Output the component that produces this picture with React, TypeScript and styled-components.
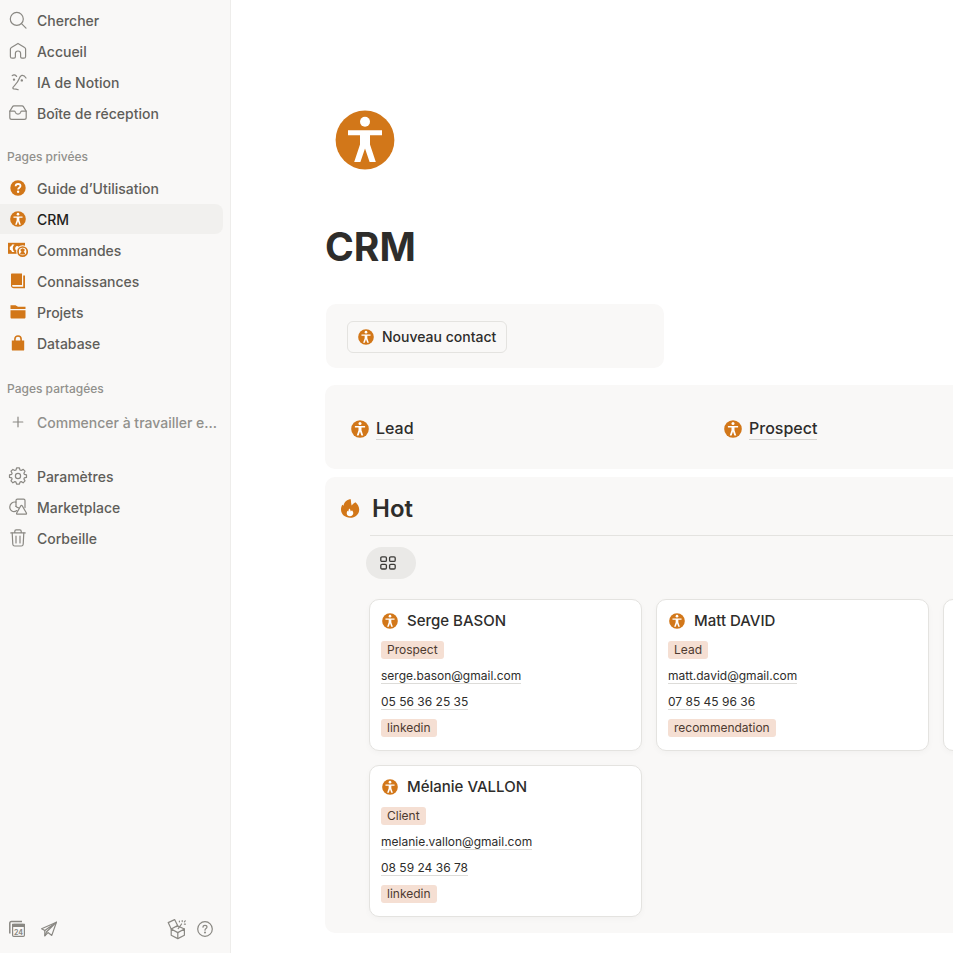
import React from "react";
import styled, { createGlobalStyle, css } from "styled-components";

const color = {
  orange: "#d27719",
  text: "#2e2d2b",
  strong: "#1f1e1c",
  nav: "#5f5e5a",
  muted: "#91908c",
  icon: "#8a8883",
  panel: "#f9f8f7",
  line: "#e4e3e0",
  tag: "#f5dfd3",
  tagText: "#4d3a30",
};

const GlobalStyle = createGlobalStyle`
  *, *::before, *::after { box-sizing: border-box; }
  body {
    margin: 0;
    background: #ffffff;
    color: ${color.text};
    font-family: Inter, "Liberation Sans", sans-serif;
    -webkit-font-smoothing: antialiased;
  }
  h1, h2, h3, ul { margin: 0; padding: 0; }
  ul { list-style: none; }
  a { color: inherit; text-decoration: none; }
  button { font: inherit; color: inherit; cursor: pointer; }
  svg { display: block; flex: none; }
`;

/* ---------- icons ---------- */

type IconProps = { size?: number };

const PersonIcon = ({ size = 16 }: IconProps) => (
  <svg width={size} height={size} viewBox="0 0 60 60" aria-hidden="true">
    <circle cx="30" cy="30" r="29.4" fill={color.orange} />
    <g fill="#fff">
      <circle cx="30" cy="11.8" r="5" />
      <path d="M13 20.3H47V25.2H35V34.5L40.8 52H34.6L30 38.6L25.4 52H19.2L25 34.5V25.2H13Z" />
    </g>
  </svg>
);

const QuestionDiscIcon = () => (
  <svg width="16" height="16" viewBox="0 0 16 16" aria-hidden="true">
    <circle cx="8" cy="8" r="7.7" fill={color.orange} />
    <path d="M5.6 6.2C5.7 4.8 6.7 4 8.1 4C9.6 4 10.5 4.9 10.5 6C10.5 7 9.8 7.4 9.1 7.9C8.4 8.4 8.1 8.7 8.1 9.4" fill="none" stroke="#fff" strokeWidth="1.8" />
    <circle cx="8.1" cy="11.7" r="1.2" fill="#fff" />
  </svg>
);

const MoneyIcon = () => (
  <svg width="20" height="16" viewBox="0 0 20 16" aria-hidden="true">
    <rect x="0" y="0.8" width="17" height="11" fill={color.orange} />
    <path d="M4 2.6H6.6C5.4 3.6 4.8 4.8 4.8 6.3C4.8 7.8 5.4 9 6.6 10H4C3.8 8.8 3 8 1.8 7.8V4.8C3 4.6 3.8 3.8 4 2.6Z" fill="#fff" />
    <path d="M8.8 4C7.7 4.6 7.2 5.4 7.2 6.4C7.2 7.4 7.6 8.2 8.4 8.8L10.6 4.4C10 4 9.4 3.8 8.8 4Z" fill="#fff" />
    <circle cx="14.6" cy="9.6" r="6.4" fill={color.panel} />
    <circle cx="14.6" cy="9.6" r="4.6" fill="#fff" stroke={color.orange} strokeWidth="1.7" />
    <path d="M14.6 6.2L16.6 7.3V9L15.6 9.8L17 11.1V12.4H12.2V11.1L13.6 9.8L12.6 9V7.3Z" fill={color.orange} />
  </svg>
);

const BookIcon = () => (
  <svg width="16" height="16" viewBox="0 0 16 16" fill={color.orange} aria-hidden="true">
    <path d="M2 0.4H12V12H3.2C2.5 12 2 12.4 2 12.9Z" />
    <path d="M13.2 2.6H15V15.3H3.8C2.4 15.3 1 14.4 1 12.8V1.4C1 0.8 1.4 0.4 2 0.4V12.8C2.2 13.6 2.8 13.8 3.8 13.8H13.2Z" />
  </svg>
);

const FolderIcon = () => (
  <svg width="16" height="16" viewBox="0 0 16 16" fill={color.orange} aria-hidden="true">
    <path d="M0.5 1.2H5.5L8 2.8H15.5V5H0.5Z" />
    <path d="M0.5 6.2H15.5V13.2C15.5 14 15 14.6 14.2 14.6H1.8C1 14.6 0.5 14 0.5 13.2Z" />
  </svg>
);

const LockIcon = () => (
  <svg width="16" height="16" viewBox="0 0 16 16" aria-hidden="true">
    <path d="M4.9 7V4C4.9 2.2 6.2 1 8 1C9.8 1 11.1 2.2 11.1 4V7" fill="none" stroke={color.orange} strokeWidth="1.6" />
    <path d="M1.8 5.4H14.2V14.7C14.2 15.2 13.8 15.6 13.3 15.6H2.7C2.2 15.6 1.8 15.2 1.8 14.7Z" fill={color.orange} />
  </svg>
);

const FlameIcon = () => (
  <svg width="20" height="20" viewBox="0 0 20 20" aria-hidden="true">
    <path d="M9.6 0.2H10.8C10.9 2.4 11.2 4.6 11.6 6.4C12.6 5.4 13.8 4.2 15.4 3.2C17.6 5 19.2 7.6 19.2 10.4C19.2 15.4 15.2 18.8 10.1 18.8C5 18.8 1 15.4 1 10.6C1 8.8 1.5 7.2 2.4 5.8L3.6 6.8C3.8 4 6 1 9.6 0.2Z" fill={color.orange} />
    <path d="M9.4 9.6C10.1 10.4 10.6 11.4 10.8 12.4L12 11.2C12.9 12.2 13.3 13.1 13.3 14.1C13.3 16 11.9 17.3 10 17.3C8.1 17.3 6.7 16 6.7 14.2C6.7 13.3 7 12.5 7.5 11.8L8.4 12.6C8.4 11.4 8.7 10.4 9.4 9.6Z" fill="#fff" />
  </svg>
);

const Outline = styled.svg.attrs({ viewBox: "0 0 20 20", width: 20, height: 20, "aria-hidden": true })`
  overflow: visible;
  fill: none;
  stroke: ${color.icon};
  stroke-width: 1.2;
  stroke-linecap: round;
  stroke-linejoin: round;
`;

const SearchIcon = () => (
  <Outline>
    <circle cx="8.8" cy="8.9" r="6.5" />
    <path d="M13.5 13.7L18 18.2" />
  </Outline>
);

const HomeIcon = () => (
  <Outline>
    <path d="M10 2.4L16.6 6.4C17.3 6.8 17.6 7.3 17.6 8V15.4C17.6 16.6 17 17.2 15.8 17.2H14C13 17.2 12.6 16.7 12.6 15.8V12.6C12.6 11 11.5 10 10 10C8.5 10 7.4 11 7.4 12.6V15.8C7.4 16.7 7 17.2 6 17.2H4.2C3 17.2 2.4 16.6 2.4 15.4V8C2.4 7.3 2.7 6.8 3.4 6.4Z" />
  </Outline>
);

const AiFaceIcon = () => (
  <Outline>
    <path d="M4.2 3.6C5.6 2.4 7.4 2.7 8.6 4.4" />
    <path d="M18 6C16.8 4 15.4 3.1 13.8 3.4C12.2 3.7 11.6 5.2 11 7C9.8 10.4 7.4 12.6 5.2 15.2C4.6 16 4.8 16.7 5.8 16.8C7.4 16.9 8.8 17.2 10.2 17.7" />
    <circle cx="6" cy="7.6" r="0.6" fill={color.icon} />
    <circle cx="13.8" cy="8.4" r="0.6" fill={color.icon} />
  </Outline>
);

const InboxIcon = () => (
  <Outline>
    <path d="M4.6 3.6C4.9 3.1 5.3 2.9 5.9 2.9H14.1C14.7 2.9 15.1 3.1 15.4 3.6L18.2 8.2V14.4C18.2 15.6 17.5 16.3 16.3 16.3H3.7C2.5 16.3 1.8 15.6 1.8 14.4V8.2Z" />
    <path d="M1.8 8.2H6.4C7 8.2 7.2 8.6 7.3 9.2C7.6 10.5 8.6 11.2 10 11.2C11.4 11.2 12.4 10.5 12.7 9.2C12.8 8.6 13 8.2 13.6 8.2H18.2" />
  </Outline>
);

const PlusIcon = () => (
  <Outline>
    <path d="M10 5.2V14.8M5.2 10H14.8" />
  </Outline>
);

const GearIcon = () => (
  <Outline>
    <circle cx="10" cy="10" r="2.6" />
    <path d="M8.6 1.8H11.4L12 4L13.2 4.5L15.2 3.4L17 5.2L15.9 7.2L16.3 8.3L18.5 8.8V11.4L16.3 11.9L15.9 12.9L17 14.9L15.1 16.8L13.2 15.6L12 16.1L11.4 18.2H8.6L8 16.1L6.9 15.6L4.9 16.8L3 14.9L4.1 12.9L3.7 11.9L1.5 11.4V8.8L3.7 8.3L4.1 7.2L3 5.2L4.9 3.4L6.8 4.5L8 4Z" />
  </Outline>
);

const ShapesIcon = () => (
  <Outline>
    <path d="M8.8 13.6C5.2 16.2 1.6 13.4 1.8 9.8C2 6.4 5 4.4 8 5.2" />
    <path d="M8 9.4V3.6C8 2.7 8.5 2.2 9.4 2.2H15.6C16.5 2.2 17 2.7 17 3.6V10.6" />
    <path d="M8 9.4C8.4 10 9.2 10.6 10.6 10.8" />
    <path d="M12.8 8.8C13.2 8.2 13.8 8.2 14.2 8.8L18.4 16C18.7 16.7 18.4 17.2 17.7 17.2H9.4C8.6 17.2 8.3 16.7 8.7 16Z" />
  </Outline>
);

const TrashIcon = () => (
  <Outline>
    <path d="M2.8 4.9H17.2M6.8 4.8V3.2C6.8 2.4 7.3 1.9 8.1 1.9H11.9C12.7 1.9 13.2 2.4 13.2 3.2V4.8" />
    <path d="M4.2 5L4.8 16.2C4.9 17.4 5.6 18 6.7 18H13.3C14.4 18 15.1 17.4 15.2 16.2L15.8 5M8 8V15M12 8V15" />
  </Outline>
);

const CalendarIcon = () => (
  <svg width="20" height="20" viewBox="0 0 20 20" aria-hidden="true">
    <path d="M2.8 14.5V4.2C2.8 3.2 3.4 2.6 4.4 2.6H15" fill="none" stroke={color.icon} strokeWidth="1.5" />
    <rect x="5.6" y="5.4" width="11.8" height="12" rx="1.2" fill="none" stroke={color.icon} strokeWidth="1.2" />
    <path d="M5 4.8H18V8H5Z" fill={color.icon} />
    <text x="11.5" y="15.6" textAnchor="middle" fontFamily="Inter, sans-serif" fontSize="7" fontWeight="700" fill={color.icon}>24</text>
  </svg>
);

const PlaneIcon = () => (
  <Outline>
    <path d="M2.6 9.8L17.4 3.2L12.8 16.4L9 13.6L5.8 16.8V11.6Z" />
    <path d="M5.8 11.6L17.4 3.2L7.6 12.8L6 16.6" />
  </Outline>
);

const GiftBoxIcon = () => (
  <Outline>
    <path d="M4.2 10L10.8 13.6L17.4 10V16.2L10.8 19.6L4.2 16.2Z" />
    <path d="M10.8 13.6V19.4M9.4 7.6L10.8 7L17.4 10" />
    <path d="M1.2 3.6L7.6 0.6L10.6 6.6L4.2 10Z" />
    <path d="M11.2 9.6L14.6 5M12.4 2.2V2.8M15.2 1.6V2.6M18.2 1.8L17.4 2.8M17.4 5.2H18.4" />
  </Outline>
);

const HelpIcon = () => (
  <Outline>
    <circle cx="10" cy="10" r="7.3" />
    <path d="M8 8.2C8 7 8.9 6.3 10 6.3C11.2 6.3 12 7 12 8.1C12 9.6 10 9.6 10 11.2" />
    <circle cx="10" cy="13.4" r="0.4" fill={color.icon} />
  </Outline>
);

const GalleryIcon = () => (
  <svg width="16" height="14" viewBox="0 0 16 14" fill="none" stroke="#3c3b38" strokeWidth="1.3" aria-hidden="true">
    <rect x="0.8" y="0.8" width="5.6" height="4.6" rx="1.2" />
    <rect x="9.6" y="0.8" width="5.6" height="4.6" rx="1.2" />
    <rect x="0.8" y="8.4" width="5.6" height="4.6" rx="1.2" />
    <rect x="9.6" y="8.4" width="5.6" height="4.6" rx="1.2" />
  </svg>
);

/* ---------- sidebar ---------- */

const Layout = styled.div`
  display: grid;
  grid-template-columns: 231px minmax(0, 1fr);
  min-height: 100vh;
`;

const Sidebar = styled.aside`
  display: flex;
  flex-direction: column;
  position: sticky;
  top: 0;
  height: 100vh;
  padding: 5px 7px 10px 0;
  background: ${color.panel};
  border-right: 1px solid #eeedeb;
`;

const NavList = styled.ul<{ $top?: number }>`
  display: flex;
  flex-direction: column;
  gap: 1px;
  margin-top: ${(p) => p.$top ?? 0}px;
`;

const NavLink = styled.a<{ $active?: boolean; $muted?: boolean }>`
  display: flex;
  align-items: center;
  gap: 9px;
  height: 30px;
  padding: 2px 4px 0 8px;
  border-radius: 0 8px 8px 0;
  font-size: 14px;
  font-weight: 500;
  line-height: 20px;
  color: ${(p) => (p.$muted ? color.muted : color.nav)};
  ${(p) =>
    p.$active &&
    css`
      background: #f1f0ee;
      color: ${color.strong};
    `}
`;

const NavIcon = styled.span`
  display: flex;
  flex: none;
  justify-content: center;
  width: 20px;
  padding-bottom: 2px;
`;

const NavLabel = styled.span`
  white-space: nowrap;
`;

const SectionTitle = styled.h2<{ $top?: number }>`
  margin-top: ${(p) => p.$top ?? 20}px;
  padding-left: 7px;
  font-size: 12px;
  font-weight: 500;
  line-height: 18px;
  color: ${color.muted};
`;

const SidebarFooter = styled.div`
  display: flex;
  align-items: center;
  justify-content: space-between;
  margin-top: auto;
  padding: 0 8px 4px 7px;
`;

const FooterGroup = styled.div<{ $gap: number }>`
  display: flex;
  gap: ${(p) => p.$gap}px;
`;

const IconButton = styled.button`
  display: flex;
  padding: 0;
  border: 0;
  background: none;
`;

/* ---------- page ---------- */

const Main = styled.main`
  min-width: 0;
  overflow-x: hidden;
  padding: 110px 0 20px 94px;
`;

const Content = styled.div`
  display: flex;
  flex-direction: column;
  min-width: 907px;
`;

const PageIcon = styled.div`
  padding-left: 10px;
`;

const PageTitle = styled.h1`
  margin-top: 53px;
  font-size: 39px;
  font-weight: 700;
  line-height: 48px;
`;

const ActionPanel = styled.section`
  width: 338px;
  margin: 33px 0 17px 1px;
  padding: 17px 21px 15px;
  border-radius: 10px;
  background: ${color.panel};
`;

const ActionButton = styled.button`
  display: inline-flex;
  align-items: center;
  gap: 8px;
  height: 32px;
  padding: 0 10px 1px;
  border: 1px solid ${color.line};
  border-radius: 6px;
  background: transparent;
  font-size: 14px;
  font-weight: 500;
  vertical-align: top;
`;

const LinksPanel = styled.nav`
  display: grid;
  grid-template-columns: 373px 1fr;
  padding: 32px 26px 29px;
  border-radius: 10px;
  background: ${color.panel};
`;

const PageLink = styled.a`
  display: flex;
  align-items: center;
  justify-self: start;
  gap: 7px;
  font-size: 16px;
  font-weight: 500;
`;

const LinkLabel = styled.span`
  border-bottom: 1px solid #d6d5d2;
  line-height: 22px;
`;

const BoardPanel = styled.section`
  margin-top: 8px;
  padding: 16px 16px 16px 15px;
  border-radius: 10px;
  background: ${color.panel};
`;

const BoardTitle = styled.h2`
  display: flex;
  align-items: center;
  gap: 12px;
  font-size: 24px;
  font-weight: 600;
  line-height: 32px;
`;

const BoardBody = styled.div`
  margin-left: 29px;
`;

const Divider = styled.hr`
  height: 1px;
  margin: 10px 0 11px 1px;
  border: 0;
  background: ${color.line};
`;

const ViewTab = styled.button`
  display: flex;
  align-items: center;
  width: 50px;
  height: 32px;
  margin-left: -3px;
  padding: 0 14px;
  border: 0;
  border-radius: 16px;
  background: #eae9e7;
`;

const Gallery = styled.div`
  display: grid;
  grid-template-columns: repeat(3, minmax(0, 1fr));
  gap: 14px;
  margin-top: 20px;
`;

const Card = styled.article`
  display: flex;
  flex-direction: column;
  align-items: flex-start;
  gap: 8px;
  min-height: 152px;
  padding: 11px 11px 13px;
  border: 1px solid ${color.line};
  border-radius: 10px;
  background: #ffffff;
  box-shadow: 0 2px 6px rgba(15, 15, 15, 0.03);
`;

const CardTitle = styled.h3`
  display: flex;
  align-items: center;
  gap: 9px;
  margin-bottom: 2px;
  padding-left: 1px;
  font-size: 15px;
  font-weight: 500;
  line-height: 20px;
`;

const Tag = styled.span`
  padding: 0 6px;
  border-radius: 3px;
  background: ${color.tag};
  color: ${color.tagText};
  font-size: 12px;
  line-height: 18px;
`;

const CardLink = styled.a`
  margin: 1px 0;
  border-bottom: 1px solid #dddcd9;
  font-size: 12px;
  line-height: 15px;
`;

type Contact = { name: string; status: string; email: string; phone: string; source: string };

const contacts: (Contact | null)[] = [
  { name: "Serge BASON", status: "Prospect", email: "serge.bason@gmail.com", phone: "05 56 36 25 35", source: "linkedin" },
  { name: "Matt DAVID", status: "Lead", email: "matt.david@gmail.com", phone: "07 85 45 96 36", source: "recommendation" },
  null,
  { name: "Mélanie VALLON", status: "Client", email: "melanie.vallon@gmail.com", phone: "08 59 24 36 78", source: "linkedin" },
];

type NavEntry = { label: string; icon: React.ReactNode; active?: boolean; muted?: boolean };

const mainNav: NavEntry[] = [
  { label: "Chercher", icon: <SearchIcon /> },
  { label: "Accueil", icon: <HomeIcon /> },
  { label: "IA de Notion", icon: <AiFaceIcon /> },
  { label: "Boîte de réception", icon: <InboxIcon /> },
];

const privatePages: NavEntry[] = [
  { label: "Guide d’Utilisation", icon: <QuestionDiscIcon /> },
  { label: "CRM", icon: <PersonIcon />, active: true },
  { label: "Commandes", icon: <MoneyIcon /> },
  { label: "Connaissances", icon: <BookIcon /> },
  { label: "Projets", icon: <FolderIcon /> },
  { label: "Database", icon: <LockIcon /> },
];

const sharedPages: NavEntry[] = [
  { label: "Commencer à travailler e…", icon: <PlusIcon />, muted: true },
];

const toolsNav: NavEntry[] = [
  { label: "Paramètres", icon: <GearIcon /> },
  { label: "Marketplace", icon: <ShapesIcon /> },
  { label: "Corbeille", icon: <TrashIcon /> },
];

const Nav = ({ items, top }: { items: NavEntry[]; top?: number }) => (
  <NavList $top={top}>
    {items.map((item) => (
      <li key={item.label}>
        <NavLink href="#" $active={item.active} $muted={item.muted} aria-current={item.active ? "page" : undefined}>
          <NavIcon>{item.icon}</NavIcon>
          <NavLabel>{item.label}</NavLabel>
        </NavLink>
      </li>
    ))}
  </NavList>
);

const ContactCard = ({ contact }: { contact: Contact }) => (
  <Card>
    <CardTitle>
      <PersonIcon />
      {contact.name}
    </CardTitle>
    <Tag>{contact.status}</Tag>
    <CardLink href={`mailto:${contact.email}`}>{contact.email}</CardLink>
    <CardLink href={`tel:${contact.phone.replace(/ /g, "")}`}>{contact.phone}</CardLink>
    <Tag>{contact.source}</Tag>
  </Card>
);

export default function App() {
  return (
    <>
      <GlobalStyle />
      <Layout>
        <Sidebar>
          <Nav items={mainNav} />
          <SectionTitle>Pages privées</SectionTitle>
          <Nav items={privatePages} top={7} />
          <SectionTitle $top={22}>Pages partagées</SectionTitle>
          <Nav items={sharedPages} top={9} />
          <Nav items={toolsNav} top={24} />
          <SidebarFooter>
            <FooterGroup $gap={12}>
              <IconButton type="button" aria-label="Calendrier"><CalendarIcon /></IconButton>
              <IconButton type="button" aria-label="Inviter"><PlaneIcon /></IconButton>
            </FooterGroup>
            <FooterGroup $gap={8}>
              <IconButton type="button" aria-label="Nouveautés"><GiftBoxIcon /></IconButton>
              <IconButton type="button" aria-label="Aide"><HelpIcon /></IconButton>
            </FooterGroup>
          </SidebarFooter>
        </Sidebar>
        <Main>
          <Content>
            <PageIcon>
              <PersonIcon size={60} />
            </PageIcon>
            <PageTitle>CRM</PageTitle>
            <ActionPanel>
              <ActionButton type="button">
                <PersonIcon />
                Nouveau contact
              </ActionButton>
            </ActionPanel>
            <LinksPanel>
              <PageLink href="#lead">
                <PersonIcon size={18} />
                <LinkLabel>Lead</LinkLabel>
              </PageLink>
              <PageLink href="#prospect">
                <PersonIcon size={18} />
                <LinkLabel>Prospect</LinkLabel>
              </PageLink>
            </LinksPanel>
            <BoardPanel>
              <BoardTitle>
                <FlameIcon />
                Hot
              </BoardTitle>
              <BoardBody>
                <Divider />
                <ViewTab type="button" aria-label="Galerie">
                  <GalleryIcon />
                </ViewTab>
                <Gallery>
                  {contacts.map((contact, i) =>
                    contact ? <ContactCard key={contact.name} contact={contact} /> : <Card key={i} />
                  )}
                </Gallery>
              </BoardBody>
            </BoardPanel>
          </Content>
        </Main>
      </Layout>
    </>
  );
}
